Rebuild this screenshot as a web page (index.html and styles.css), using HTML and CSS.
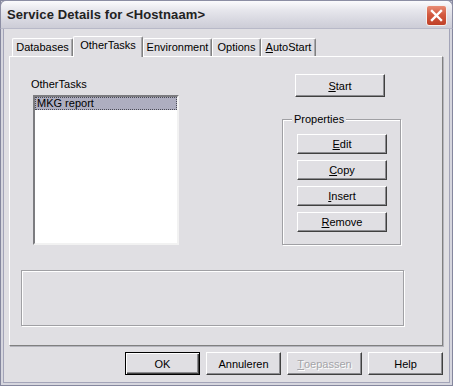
FILE: index.html
```html
<!DOCTYPE html>
<html>
<head>
<meta charset="utf-8">
<link rel="stylesheet" href="styles.css">
</head>
<body>
<div class="window">
  <div class="titlebar">
    <span class="title">Service Details for &lt;Hostnaam&gt;</span>
    <span class="close"><svg width="13" height="13" viewBox="0 0 13 13"><path d="M2 2 L11 11 M11 2 L2 11" stroke="#fff" stroke-width="2.4" stroke-linecap="square"/></svg></span>
  </div>
  <div class="client">
    <div class="tabs">
      <div class="tab t-db">Databases</div>
      <div class="tab tab-sel t-ot">OtherTasks</div>
      <div class="tab t-env">Environment</div>
      <div class="tab t-opt">Options</div>
      <div class="tab t-as"><u>A</u>utoStart</div>
    </div>
    <div class="panel">
      <div class="toprow">
        <div class="leftcol">
          <div class="label">OtherTasks</div>
          <div class="listbox">
            <div class="item sel">MKG report</div>
          </div>
        </div>
        <div class="rightcol">
          <div class="btn btn-start"><u>S</u>tart</div>
          <div class="group">
            <div class="legend">Properties</div>
            <div class="btnstack">
              <div class="btn btn-small"><u>E</u>dit</div>
              <div class="btn btn-small"><u>C</u>opy</div>
              <div class="btn btn-small"><u>I</u>nsert</div>
              <div class="btn btn-small"><u>R</u>emove</div>
            </div>
          </div>
        </div>
      </div>
      <div class="group group-bottom"></div>
    </div>
    <div class="footer">
      <div class="btn btn-foot btn-default">OK</div>
      <div class="btn btn-foot">Annuleren</div>
      <div class="btn btn-foot disabled"><u>T</u>oepassen</div>
      <div class="btn btn-foot">Help</div>
    </div>
  </div>
</div>
</body>
</html>
```

FILE: styles.css
```css
html, body {
  margin: 0;
  padding: 0;
  background: #e0dfe3;
}
body {
  font-family: "Liberation Sans", Arial, sans-serif;
  font-size: 11px;
  color: #000;
}
.window {
  width: 453px;
  height: 386px;
  box-sizing: border-box;
  background: #e0dfe3;
  box-shadow: inset 0 0 0 1px #85879e, inset 0 0 0 3px #d6d6de, inset 0 0 0 4px #a3a4b8;
  display: flex;
  flex-direction: column;
}
.titlebar {
  height: 29px;
  box-sizing: border-box;
  border: 1px solid #8c8ea4;
  border-bottom: 1px solid #b8b9c8;
  border-radius: 6px 6px 0 0;
  background: linear-gradient(#fbfbfd 0%, #e6e6ec 35%, #d6d6df 75%, #cdcdd7 100%);
  display: flex;
  align-items: center;
  justify-content: space-between;
  padding: 0 5px 0 6px;
}
.title {
  font-weight: bold;
  font-size: 13px;
  color: #222;
  letter-spacing: 0.1px;
}
.close {
  width: 21px;
  height: 21px;
  box-sizing: border-box;
  border: 1px solid #f4f0ee;
  border-radius: 3px;
  background: linear-gradient(#e88c74, #d35a40 45%, #c04028);
  display: flex;
  align-items: center;
  justify-content: center;
  margin-top: 1px;
}
.client {
  padding: 7px 10px 0 9px;
  display: flex;
  flex-direction: column;
}
.tabs {
  display: flex;
  align-items: flex-end;
  height: 20px;
  padding-left: 3px;
  position: relative;
  z-index: 1;
}
.tab {
  height: 18px;
  box-sizing: border-box;
  border-top: 1px solid #fff;
  border-left: 1px solid #fff;
  border-right: 1px solid #808080;
  border-radius: 2px 2px 0 0;
  box-shadow: inset -1px 0 #a8a8ac;
  text-align: center;
  line-height: 16px;
}
.t-db { width: 61px; }
.t-ot { width: 70px; }
.t-env { width: 69px; }
.t-opt { width: 49px; }
.t-as { width: 55px; }
.tab-sel {
  height: 21px;
  margin-bottom: -1px;
  background: #e0dfe3;
  line-height: 17px;
  padding-bottom: 3px;
}
.panel {
  width: 434px;
  height: 290px;
  box-sizing: border-box;
  border-top: 1px solid #fff;
  border-left: 1px solid #fff;
  border-right: 1px solid #808080;
  border-bottom: 1px solid #808080;
  box-shadow: 1px 1px 0 #b4b4bc;
  display: flex;
  flex-direction: column;
}
.toprow {
  display: flex;
}
.leftcol {
  padding: 21px 0 0 21px;
  width: 148px;
}
.label {
  line-height: 13px;
  margin-bottom: 4px;
}
.listbox {
  margin-left: 2px;
  width: 146px;
  height: 150px;
  box-sizing: border-box;
  background: #fff;
  border-top: 2px solid #7c7c80;
  border-left: 2px solid #7c7c80;
  border-right: 2px solid #f2f2f2;
  border-bottom: 2px solid #f2f2f2;
}
.item {
  height: 13px;
  line-height: 12px;
  padding-left: 2px;
  box-sizing: border-box;
}
.item.sel {
  background: #aeaec0;
  outline: 1px dotted #4a4a55;
  outline-offset: -1px;
}
.rightcol {
  margin-left: 103px;
  padding-top: 17px;
  display: flex;
  flex-direction: column;
}
.btn {
  box-sizing: border-box;
  background: #e0dfe3;
  border-top: 1px solid #fff;
  border-left: 1px solid #fff;
  border-right: 1px solid #404040;
  border-bottom: 1px solid #404040;
  box-shadow: inset -1px -1px #8c8c90;
  display: flex;
  align-items: center;
  justify-content: center;
}
.btn-start {
  margin-left: 13px;
  width: 90px;
  height: 23px;
}
.group {
  box-sizing: border-box;
  border: 1px solid #a0a0a4;
  box-shadow: 1px 1px 0 #fff, inset 1px 1px 0 #fff;
}
.rightcol .group {
  margin-top: 22px;
  width: 119px;
  height: 126px;
}
.legend {
  width: fit-content;
  margin: -7px 0 0 9px;
  padding: 0 2px;
  background: #e0dfe3;
  line-height: 13px;
}
.btnstack {
  margin: 8px 0 0 14px;
  display: flex;
  flex-direction: column;
  gap: 6px;
}
.btn-small {
  width: 90px;
  height: 20px;
}
.group-bottom {
  margin: 25px 0 0 11px;
  width: 383px;
  height: 56px;
}
.footer {
  display: flex;
  justify-content: flex-end;
  gap: 6px;
  margin-top: 6px;
}
.btn-foot {
  width: 75px;
  height: 23px;
}
.btn-default {
  border: 1px solid #000;
  box-shadow: inset 1px 1px #fff, inset -1px -1px #404040, inset -2px -2px #8c8c90;
}
.disabled {
  color: #a4a4a8;
  text-shadow: 1px 1px 0 #fff;
}
```
